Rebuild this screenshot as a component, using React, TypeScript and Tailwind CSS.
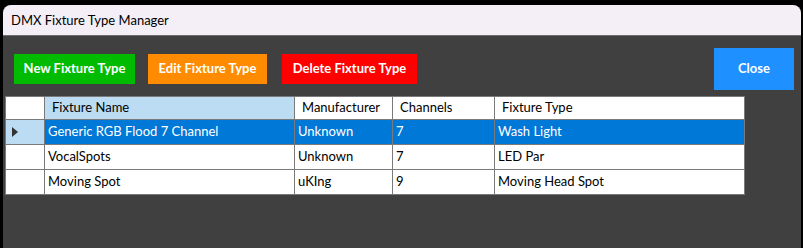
import React from 'react';

const rows = [
  { name: 'Generic RGB Flood 7 Channel', maker: 'Unknown', channels: '7', type: 'Wash Light', selected: true },
  { name: 'VocalSpots', maker: 'Unknown', channels: '7', type: 'LED Par', selected: false },
  { name: 'Moving Spot', maker: 'uKIng', channels: '9', type: 'Moving Head Spot', selected: false },
];

const font = { fontFamily: 'Lato, "Noto Sans", sans-serif' };

const App: React.FC = () => {
  return (
    <div className="w-[803px] h-[248px] bg-black overflow-hidden" style={font}>
      <div className="ml-[3px] mt-[5px] w-[798px] h-[243px] rounded-t-[8px] overflow-hidden flex flex-col bg-[#404040]">
        <div className="h-[31px] shrink-0 bg-[#f4eef6] border-b border-[#6e6e6e] flex items-center pl-[8px] pt-[1px] text-[13px] text-black">
          DMX Fixture Type Manager
        </div>

        <div className="flex items-center pl-[11px] pr-[7px] pt-[8px] h-[58px] text-[13px] font-bold text-white">
          <button className="w-[121px] h-[30px] bg-[#00bb00]">New Fixture Type</button>
          <button className="ml-[13px] w-[119px] h-[30px] bg-[#ff8c00]">Edit Fixture Type</button>
          <button className="ml-[15px] w-[135px] h-[30px] bg-[#ff0000]">Delete Fixture Type</button>
          <button className="ml-auto w-[80px] h-[42px] bg-[#1e90ff]">Close</button>
        </div>

        <div className="pl-[2px] mt-[2px]">
          <table className="border-collapse text-[13px] text-black table-fixed w-[739px]">
            <colgroup>
              <col className="w-[39px]" />
              <col className="w-[250px]" />
              <col className="w-[98px]" />
              <col className="w-[102px]" />
              <col className="w-[250px]" />
            </colgroup>
            <thead>
              <tr className="h-[23px]">
                <th className="border border-[#7a7a7a] bg-white" />
                <th className="border border-[#7a7a7a] bg-[#bcdcf4] font-normal text-left pl-[7px]">Fixture Name</th>
                <th className="border border-[#7a7a7a] bg-white font-normal text-left pl-[7px]">Manufacturer</th>
                <th className="border border-[#7a7a7a] bg-white font-normal text-left pl-[7px]">Channels</th>
                <th className="border border-[#7a7a7a] bg-white font-normal text-left pl-[7px]">Fixture Type</th>
              </tr>
            </thead>
            <tbody>
              {rows.map((r) => (
                <tr key={r.name} className="h-[25px]">
                  <td className={`border border-[#7a7a7a] ${r.selected ? 'bg-[#bcdcf4]' : 'bg-white'} pl-[6px]`}>
                    {r.selected && (
                      <svg width="6" height="10" viewBox="0 0 6 10" className="block">
                        <path d="M0 0 L6 5 L0 10 Z" fill="#333" />
                      </svg>
                    )}
                  </td>
                  {[r.name, r.maker, r.channels, r.type].map((v, i) => (
                    <td
                      key={i}
                      className={`border border-[#7a7a7a] pl-[3px] whitespace-nowrap ${r.selected ? 'bg-[#0078d7] text-white' : 'bg-white'}`}
                    >
                      {v}
                    </td>
                  ))}
                </tr>
              ))}
            </tbody>
          </table>
        </div>
      </div>
    </div>
  );
};

export default App;
